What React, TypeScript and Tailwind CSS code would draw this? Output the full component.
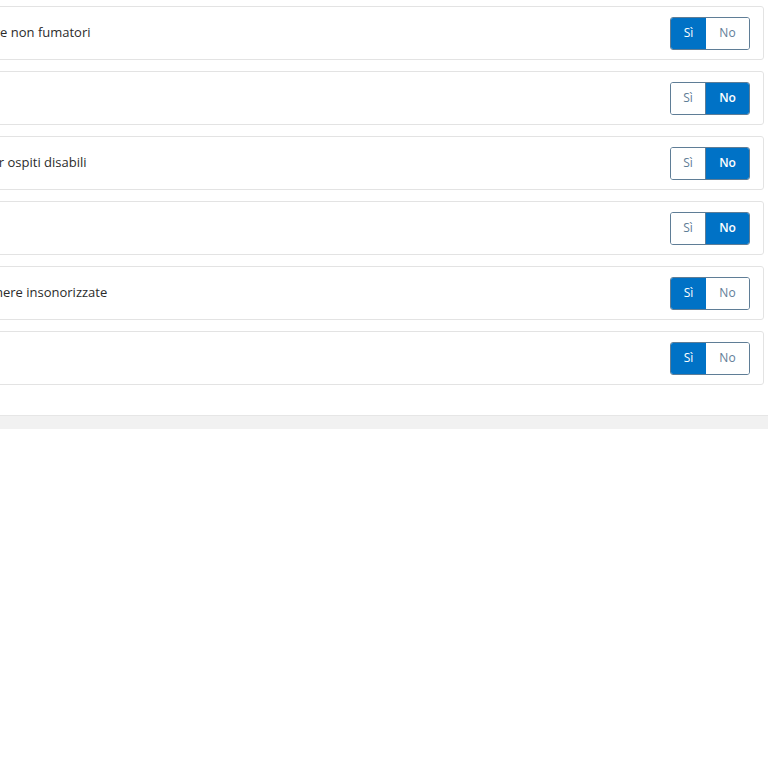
import React, { useState } from 'react';

type Option = { id: string; label: string; value: boolean };

const initialOptions: Option[] = [
  { id: 'nonsmoking', label: 'Camere non fumatori', value: true },
  { id: 'bar', label: 'Bar', value: false },
  { id: 'disabled', label: 'WC per ospiti disabili', value: false },
  { id: 'spa', label: 'Spa', value: false },
  { id: 'soundproof', label: 'Le camere insonorizzate', value: true },
  { id: 'wifi', label: 'Wi-Fi', value: true },
];

function YesNoToggle({ value, onChange }: { value: boolean; onChange: (v: boolean) => void }) {
  return (
    <div className="flex h-[33px] rounded-[3px] border border-[#5f7d96] overflow-hidden text-[12px]">
      <button
        onClick={() => onChange(true)}
        className={
          value
            ? 'w-[35px] bg-[#0072c6] text-white font-medium'
            : 'w-[35px] bg-white text-[#5f7d96] border-r border-[#5f7d96]'
        }
      >
        Sì
      </button>
      <button
        onClick={() => onChange(false)}
        className={
          value
            ? 'w-[43px] bg-white text-[#5f7d96]'
            : 'w-[43px] bg-[#0072c6] text-white font-semibold'
        }
      >
        No
      </button>
    </div>
  );
}

export default function App() {
  const [options, setOptions] = useState(initialOptions);

  const setValue = (id: string, value: boolean) =>
    setOptions((prev) => prev.map((o) => (o.id === id ? { ...o, value } : o)));

  return (
    <div className="min-h-screen bg-white overflow-hidden" style={{ fontFamily: '"Open Sans", "Noto Sans", sans-serif' }}>
      <div className="-ml-[57px] mr-[4px] pt-[6px] pb-[30px] flex flex-col gap-[11px]">
        {options.map((o) => (
          <div
            key={o.id}
            className="flex items-center justify-between h-[54px] pl-[16px] pr-[13px] border border-[#e3e3e3] rounded-[3px] bg-white"
          >
            <span className="text-[13px] text-[#2b2b2b]">{o.label}</span>
            <YesNoToggle value={o.value} onChange={(v) => setValue(o.id, v)} />
          </div>
        ))}
      </div>
      <div className="h-[14px] border-t border-[#e6e6e6] bg-[#f1f1f1]" />
    </div>
  );
}
